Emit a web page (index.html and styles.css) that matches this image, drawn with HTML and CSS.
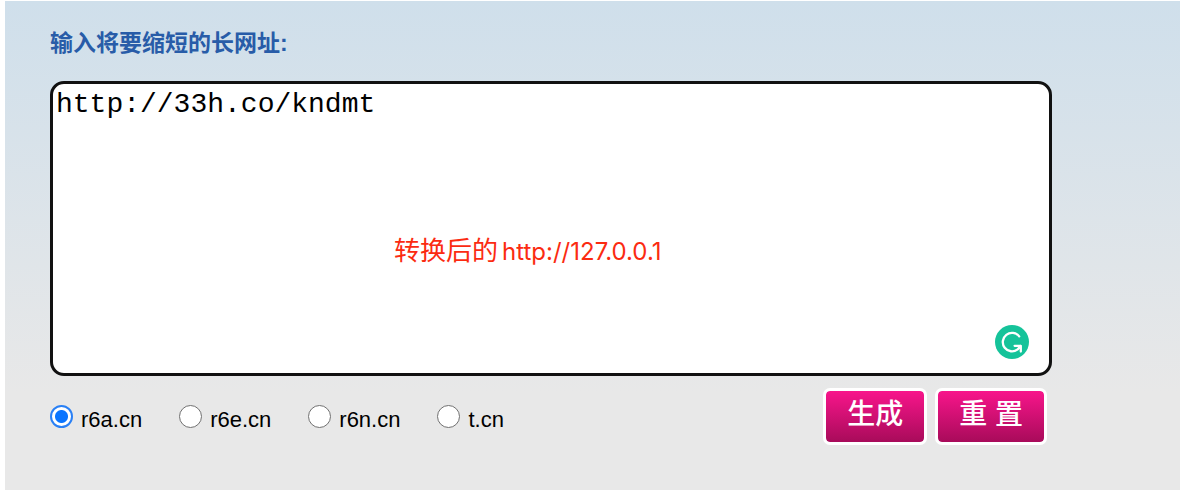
FILE: index.html
```html
<!DOCTYPE html>
<html lang="zh-CN">
<head>
<meta charset="utf-8">
<title>短网址生成</title>
<link rel="stylesheet" href="styles.css">
</head>
<body>
<form class="panel">
  <label class="title" for="url">输入将要缩短的长网址:</label>
  <div class="editor">
    <textarea class="url" id="url" spellcheck="false">http://33h.co/kndmt</textarea>
    <p class="note"><span>转换后的</span><span class="address">http://127.0.0.1</span></p>
    <svg class="badge" viewBox="0 0 34 34" aria-hidden="true">
      <circle cx="17" cy="17" r="17" fill="#15c39a"/>
      <path d="M24.2 11.4A9.2 9.2 0 1 0 22.6 24.4L25.6 20.8M19.6 20.8H25.8V26.6" fill="none" stroke="#fff" stroke-width="2.3" stroke-linecap="round" stroke-linejoin="round"/>
    </svg>
  </div>
  <div class="actions">
    <div class="domains">
      <label class="domain"><input class="radio" type="radio" name="domain" checked>r6a.cn</label>
      <label class="domain"><input class="radio" type="radio" name="domain">r6e.cn</label>
      <label class="domain"><input class="radio" type="radio" name="domain">r6n.cn</label>
      <label class="domain"><input class="radio" type="radio" name="domain">t.cn</label>
    </div>
    <div class="buttons">
      <button class="button" type="button">生成</button>
      <button class="button" type="reset">重 置</button>
    </div>
  </div>
</form>
</body>
</html>
```

FILE: styles.css
```css
* {
  box-sizing: border-box;
}

body {
  margin: 0;
  background: #fff;
  font-family: "Liberation Sans", Arial, "Noto Sans CJK SC", sans-serif;
}

.panel {
  margin: 1px 0 0 5px;
  padding: 26px 128px 45px 45px;
  background: linear-gradient(#cfdfeb, #e8e8e8 80%);
}

.title {
  display: block;
  margin-bottom: 22px;
  color: #285ca8;
  font: bold 23px/32px "Liberation Sans", "Noto Sans CJK SC", sans-serif;
}

.editor {
  position: relative;
}

.url {
  display: block;
  width: 100%;
  height: 295px;
  padding: 5px 3px;
  border: 3px solid #111;
  border-radius: 14px;
  outline: none;
  resize: none;
  background: #fff;
  color: #000;
  font: 28px/32px "Liberation Mono", "Courier New", monospace;
}

.note {
  position: absolute;
  top: 152px;
  left: 344px;
  display: flex;
  align-items: baseline;
  gap: 4px;
  margin: 0;
  color: #fb2b11;
  font: 26px/32px "Noto Sans CJK SC", sans-serif;
  pointer-events: none;
}

.address {
  font-family: Inter, sans-serif;
  font-size: 24px;
}

.badge {
  position: absolute;
  right: 23px;
  bottom: 17px;
  width: 34px;
  height: 34px;
}

.actions {
  display: flex;
  justify-content: space-between;
  padding: 12px 5px 0 0;
}

.domains {
  display: flex;
  gap: 37px;
  padding-top: 17px;
}

.domain {
  display: flex;
  gap: 8px;
  height: 28px;
  color: #000;
  font-size: 22px;
  line-height: 30px;
}

.radio {
  appearance: none;
  width: 23px;
  height: 23px;
  margin: 0;
  border: 1px solid #707070;
  border-radius: 50%;
  background: #fff;
}

.radio:checked {
  border: 2px solid #2a80f5;
  background: radial-gradient(circle, #0a75ff 6px, #fff 7px);
}

.buttons {
  display: flex;
  gap: 8px;
}

.button {
  height: 57px;
  padding: 0 21px 4px;
  border: 3px solid #fff;
  border-radius: 7px;
  background: linear-gradient(#f8158b, #a80b5a) padding-box;
  color: #fff;
  font: 500 28px/40px "Liberation Sans", "Noto Sans CJK SC", sans-serif;
}
```
